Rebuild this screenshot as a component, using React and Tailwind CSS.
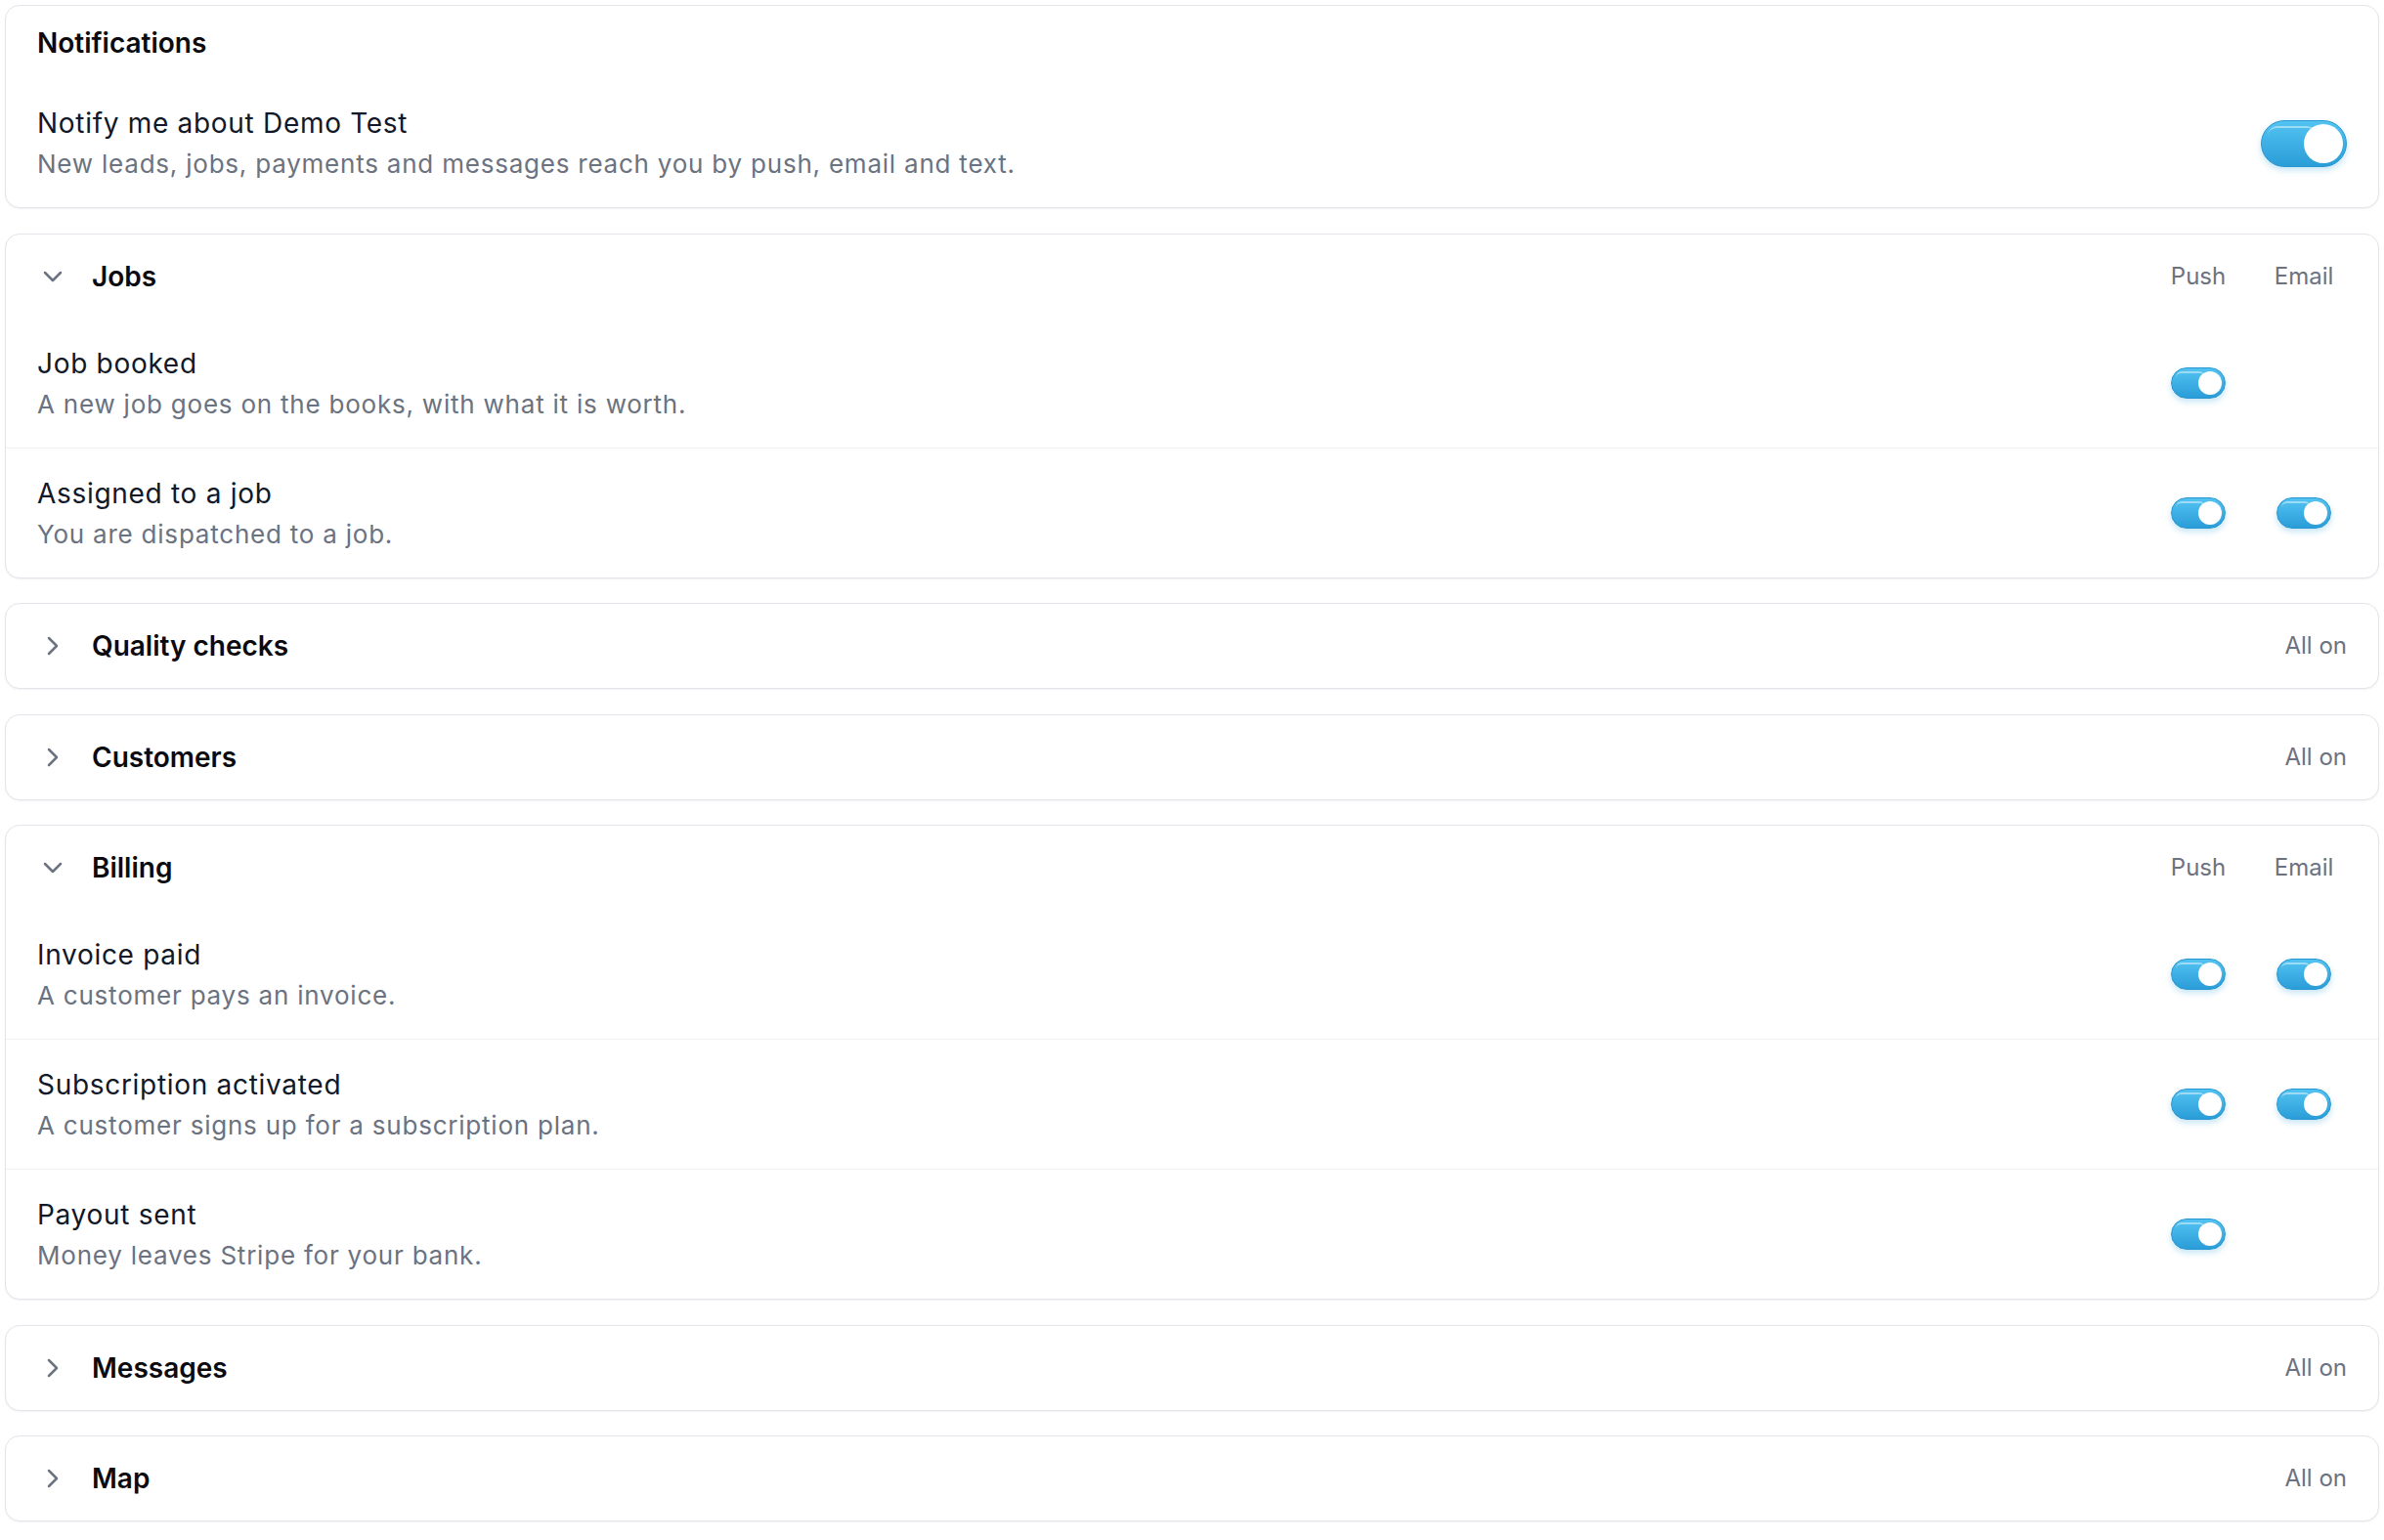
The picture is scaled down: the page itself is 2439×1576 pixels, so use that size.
import React, { useState } from 'react';

const FONT = { fontFamily: 'Inter, "Open Sans", "Noto Sans", sans-serif' };

const initialGroups = [
  {
    id: 'jobs',
    title: 'Jobs',
    open: true,
    rows: [
      { id: 'booked', title: 'Job booked', desc: 'A new job goes on the books, with what it is worth.', push: true, email: null },
      { id: 'assigned', title: 'Assigned to a job', desc: 'You are dispatched to a job.', push: true, email: true },
    ],
  },
  { id: 'quality', title: 'Quality checks', open: false, rows: [] },
  { id: 'customers', title: 'Customers', open: false, rows: [] },
  {
    id: 'billing',
    title: 'Billing',
    open: true,
    rows: [
      { id: 'invoice', title: 'Invoice paid', desc: 'A customer pays an invoice.', push: true, email: true },
      { id: 'sub', title: 'Subscription activated', desc: 'A customer signs up for a subscription plan.', push: true, email: true },
      { id: 'payout', title: 'Payout sent', desc: 'Money leaves Stripe for your bank.', push: true, email: null },
    ],
  },
  { id: 'messages', title: 'Messages', open: false, rows: [] },
  { id: 'map', title: 'Map', open: false, rows: [] },
];

function Toggle({ on, onChange, big }) {
  return (
    <button
      type="button"
      onClick={onChange}
      className={`relative inline-flex shrink-0 items-center rounded-full border border-[#2896d0] ${
        on ? 'bg-gradient-to-b from-[#52c3f1] to-[#2a9dd8]' : 'bg-gray-300'
      } shadow-[0_3px_6px_rgba(42,157,216,0.28)] ${big ? 'h-[48px] w-[88px]' : 'h-[32px] w-[56px]'}`}
    >
      <span
        className={`pointer-events-none absolute rounded-full border-t-2 border-white/45 ${
          big ? 'left-[6px] right-[30px] top-[5px] h-[20px]' : 'left-[4px] right-[20px] top-[3px] h-[12px]'
        }`}
      />
      <span
        className={`absolute rounded-full bg-white ${
          big ? 'h-[40px] w-[40px] top-[3px]' : 'h-[24px] w-[24px] top-[3px]'
        } ${on ? 'right-[3px]' : 'left-[3px]'}`}
      />
    </button>
  );
}

function Chevron({ open }) {
  return (
    <svg width="32" height="32" viewBox="0 0 24 24" fill="none" stroke="#6b7280" strokeWidth="1.9" strokeLinecap="round" strokeLinejoin="round" className="shrink-0">
      {open ? <path d="m6 9 6 6 6-6" /> : <path d="m9 18 6-6-6-6" />}
    </svg>
  );
}

function RowText({ title, desc }) {
  return (
    <div className="flex-1">
      <div className="text-[28px] leading-[40px] tracking-[0.025em] text-[#111827]">{title}</div>
      <div className="mt-[4px] text-[26px] leading-[36px] tracking-[0.03em] text-[#6b7280]">{desc}</div>
    </div>
  );
}

function Group({ group, onToggleOpen, onToggleRow }) {
  return (
    <div className="rounded-[15px] border border-[#e4e5ea] bg-white shadow-[0_1px_2px_rgba(0,0,0,0.06)]">
      <button type="button" onClick={onToggleOpen} className="flex h-[86px] w-full items-center px-8 text-left">
        <Chevron open={group.open} />
        <span className="ml-[24px] flex-1 text-[28px] font-semibold text-[#0b0b0f]">{group.title}</span>
        {group.open ? (
          <div className="flex gap-[20px] text-[24px] text-[#6b7280]">
            <span className="w-[88px] text-center">Push</span>
            <span className="w-[88px] text-center">Email</span>
          </div>
        ) : (
          <span className="text-[24px] text-[#6b7280]">All on</span>
        )}
      </button>
      {group.open && (
        <div>
          {group.rows.map((row, i) => (
            <div key={row.id} className={`flex items-center px-8 py-[26px] ${i > 0 ? 'border-t border-[#f0f1f3]' : ''}`}>
              <RowText title={row.title} desc={row.desc} />
              <div className="flex gap-[20px]">
                <div className="flex w-[88px] justify-center">
                  {row.push !== null && <Toggle on={row.push} onChange={() => onToggleRow(row.id, 'push')} />}
                </div>
                <div className="flex w-[88px] justify-center">
                  {row.email !== null && <Toggle on={row.email} onChange={() => onToggleRow(row.id, 'email')} />}
                </div>
              </div>
            </div>
          ))}
        </div>
      )}
    </div>
  );
}

export default function App() {
  const [master, setMaster] = useState(true);
  const [groups, setGroups] = useState(initialGroups);

  const toggleOpen = (id) =>
    setGroups((gs) => gs.map((g) => (g.id === id ? { ...g, open: !g.open } : g)));

  const toggleRow = (gid, rid, key) =>
    setGroups((gs) =>
      gs.map((g) =>
        g.id === gid ? { ...g, rows: g.rows.map((r) => (r.id === rid ? { ...r, [key]: !r[key] } : r)) } : g
      )
    );

  return (
    <div className="min-h-screen bg-white p-[5px]" style={FONT}>
      <div className="flex flex-col gap-[25.5px]">
        <div className="rounded-[15px] border border-[#e4e5ea] bg-white shadow-[0_1px_2px_rgba(0,0,0,0.06)]">
          <div className="flex h-[76px] items-center px-8 text-[28px] font-semibold text-[#0b0b0f]">Notifications</div>
          <div className="flex items-center px-8 pb-[26px] pt-[24px]">
            <RowText
              title="Notify me about Demo Test"
              desc="New leads, jobs, payments and messages reach you by push, email and text."
            />
            <div className="mt-[6px]">
              <Toggle big on={master} onChange={() => setMaster(!master)} />
            </div>
          </div>
        </div>

        {groups.map((g) => (
          <Group
            key={g.id}
            group={g}
            onToggleOpen={() => toggleOpen(g.id)}
            onToggleRow={(rid, key) => toggleRow(g.id, rid, key)}
          />
        ))}
      </div>
    </div>
  );
}
